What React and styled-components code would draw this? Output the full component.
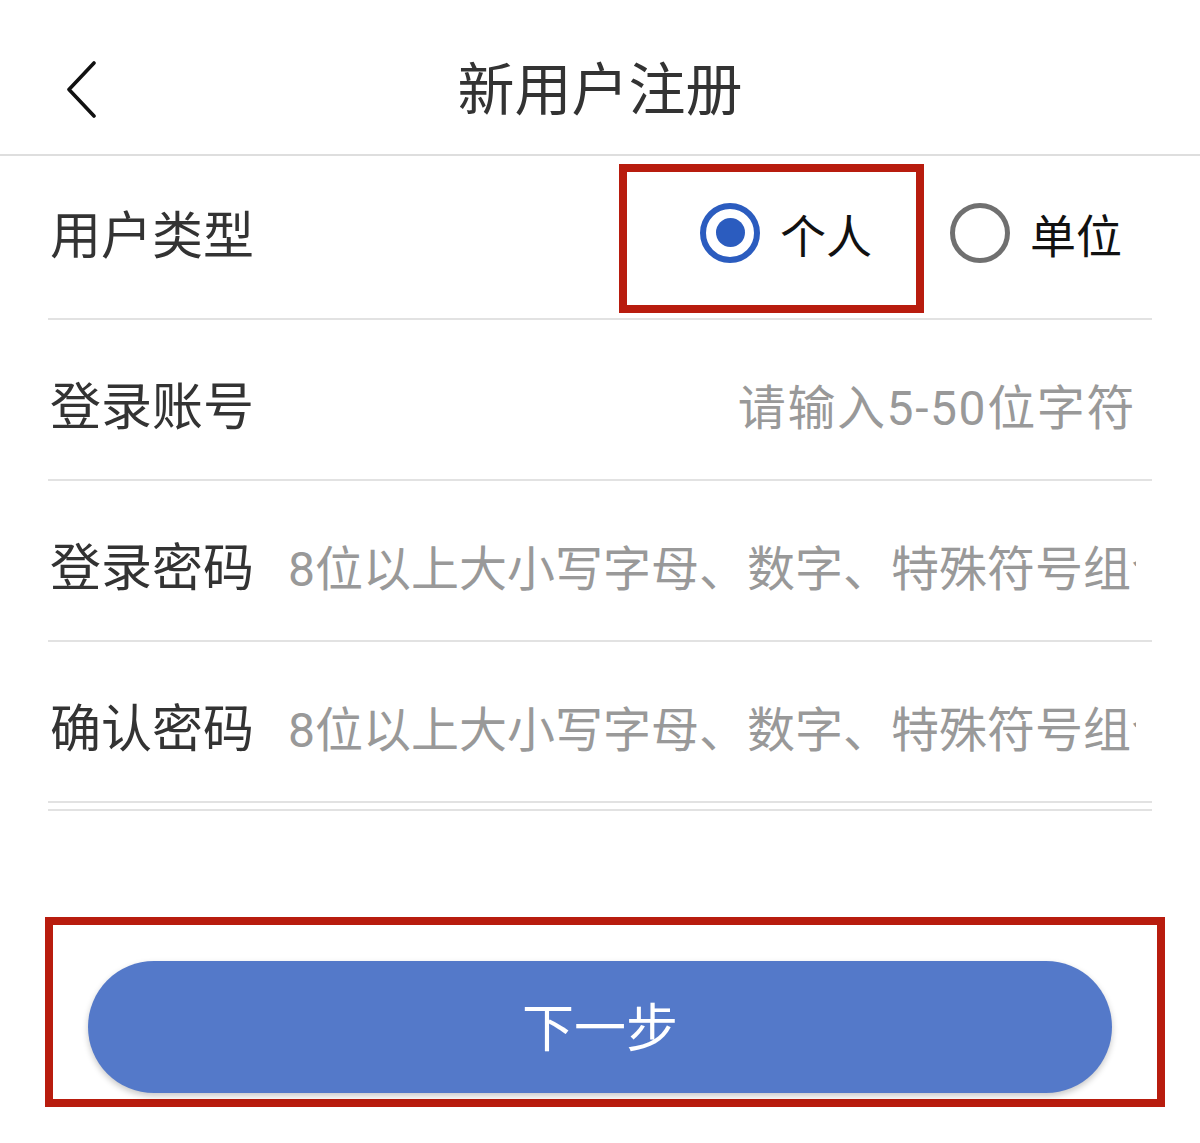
import React from 'react';
import styled, { createGlobalStyle } from 'styled-components';

const GlobalStyle = createGlobalStyle`
  body {
    margin: 0;
    background: #fff;
    font-family: Roboto, 'Noto Sans CJK SC', sans-serif;
  }
`;

const App = () => (
  <Page>
    <GlobalStyle />
    <Header>
      <BackButton aria-label='返回'>
        <svg width='32' height='58' viewBox='0 0 32 58'>
          <path d='M28 2 L3 28.5 L28 55' fill='none' stroke='#111' strokeWidth='3.6' strokeLinecap='round' strokeLinejoin='round' />
        </svg>
      </BackButton>
      <Title>新用户注册</Title>
      <span />
    </Header>

    <Form>
      <Row $lift>
        <Label>用户类型</Label>
        <RadioGroup>
          <Highlight>
            <RadioOption>
              <RadioCircle checked />
              <RadioText>个人</RadioText>
            </RadioOption>
          </Highlight>
          <RadioOption $last>
            <RadioCircle />
            <RadioText>单位</RadioText>
          </RadioOption>
        </RadioGroup>
      </Row>
      <Row>
        <Label>登录账号</Label>
        <Input $align='right' placeholder='请输入5-50位字符' />
      </Row>
      <Row>
        <Label>登录密码</Label>
        <Input type='password' placeholder='8位以上大小写字母、数字、特殊符号组合' />
      </Row>
      <Row>
        <Label>确认密码</Label>
        <Input type='password' placeholder='8位以上大小写字母、数字、特殊符号组合' />
      </Row>
      <Divider />
    </Form>

    <ButtonFrame>
      <NextButton>下一步</NextButton>
    </ButtonFrame>
  </Page>
);

//styled Components for the register page
const Page = styled.div`
  width: 1200px;
  min-height: 1143px;
  background: #fff;
`;

const Header = styled.header`
  display: grid;
  grid-template-columns: 1fr auto 1fr;
  align-items: center;
  box-sizing: border-box;
  height: 156px;
  padding-top: 26px;
  border-bottom: 2px solid #dedede;
`;

const BackButton = styled.button`
  justify-self: start;
  display: flex;
  align-items: center;
  margin-left: 66px;
  padding: 0;
  border: none;
  background: none;
`;

const Title = styled.h1`
  margin: 0;
  padding-bottom: 10px;
  font-family: 'Noto Sans CJK SC', sans-serif;
  font-size: 57px;
  font-weight: 400;
  line-height: 1;
  color: #333;
`;

const Form = styled.div`
  padding: 3px 48px 0;
`;

const Row = styled.div`
  display: flex;
  align-items: center;
  box-sizing: content-box;
  height: ${(props) => (props.$lift ? '147px' : '151px')};
  padding: ${(props) => (props.$lift ? '0 0 12px' : '8px 0 0')};
  border-bottom: 2px solid #e2e2e2;
`;

const Label = styled.span`
  flex: none;
  width: 206px;
  padding-left: 2px;
  font-family: 'Noto Sans CJK SC', sans-serif;
  font-size: 51px;
  line-height: 1;
  color: #333;
`;

const Input = styled.input`
  flex: 1;
  min-width: 0;
  margin: 10px 16px 0 32px;
  padding: 0;
  border: none;
  outline: none;
  background: transparent;
  font-family: Roboto, 'Noto Sans CJK SC', sans-serif;
  font-size: 48px;
  letter-spacing: ${(props) => (props.$align === 'right' ? '1.6px' : '0')};
  color: #333;
  text-align: ${(props) => props.$align || 'left'};

  &::placeholder {
    color: #999;
    opacity: 1;
  }
`;

const RadioGroup = styled.div`
  display: flex;
  align-items: center;
  margin-left: auto;
`;

const Highlight = styled.div`
  display: flex;
  align-items: center;
  box-sizing: border-box;
  width: 305px;
  height: 149px;
  margin-top: 12px;
  padding: 0 0 12px 73px;
  border: 8px solid #b81c0e;
`;

const RadioOption = styled.label`
  display: flex;
  align-items: center;
  gap: 20px;
  margin-left: ${(props) => (props.$last ? '26px' : '0')};
  margin-right: ${(props) => (props.$last ? '30px' : '0')};
`;

const RadioCircle = styled.span`
  position: relative;
  flex: none;
  box-sizing: border-box;
  width: 60px;
  height: 60px;
  border-radius: 50%;
  border: ${(props) => (props.checked ? '6px solid #2b5cbf' : '5px solid #707070')};

  &::after {
    content: '';
    display: ${(props) => (props.checked ? 'block' : 'none')};
    position: absolute;
    top: 50%;
    left: 50%;
    width: 29px;
    height: 29px;
    margin: -14.5px 0 0 -14.5px;
    border-radius: 50%;
    background: #2b5cbf;
  }
`;

const RadioText = styled.span`
  font-family: 'Noto Sans CJK SC', sans-serif;
  font-size: 46px;
  line-height: 1;
  color: #111;
`;

const Divider = styled.div`
  height: 2px;
  margin-top: 6px;
  background: #e2e2e2;
`;

const ButtonFrame = styled.div`
  box-sizing: border-box;
  width: 1120px;
  margin: 106px 0 0 45px;
  padding: 36px 45px 6px 35px;
  border: 8px solid #b81c0e;
`;

const NextButton = styled.button`
  display: flex;
  align-items: center;
  justify-content: center;
  width: 1024px;
  height: 132px;
  padding: 0 0 6px;
  border: none;
  border-radius: 66px;
  background-color: rgb(84, 121, 201);
  box-shadow: 0 3px 6px rgba(0, 0, 0, 0.22);
  font-family: 'Noto Sans CJK SC', sans-serif;
  font-size: 52px;
  color: #fff;
`;

export default App;
